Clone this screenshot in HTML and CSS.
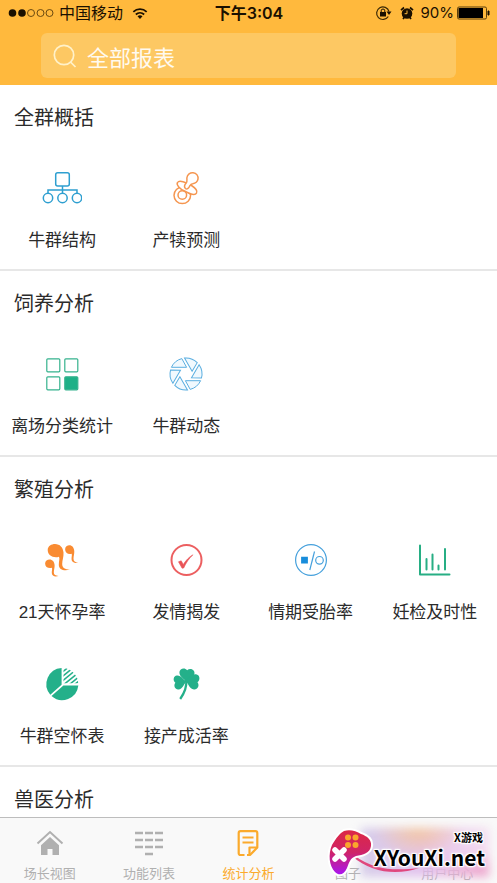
FILE: index.html
```html
<!DOCTYPE html>
<html lang="zh-CN">
<head>
<meta charset="utf-8">
<meta name="viewport" content="width=device-width, initial-scale=1">
<title>统计分析</title>
<link rel="stylesheet" href="styles.css">
</head>
<body>
<header class="top">
  <div class="status">
    <div class="status-left">
      <svg class="signal" width="46" height="10" viewBox="0 0 46 10" aria-hidden="true"><g fill="#1a1000"><circle cx="4.500" cy="5" r="3.800"/><circle cx="14" cy="5" r="3.800"/></g><g fill="none" stroke="#6b4a10" stroke-width="1"><circle cx="23" cy="5" r="3.500"/><circle cx="32.500" cy="5" r="3.500"/><circle cx="41.500" cy="5" r="3.500"/></g></svg>
      <span>中国移动</span>
      <svg width="16" height="13" viewBox="0 0 18 13" aria-hidden="true"><g fill="none" stroke="#1a1000" stroke-width="2"><path d="M1.500 4.600a11 11 0 0 1 15 0"/><path d="M4.300 7.600a7 7 0 0 1 9.400 0"/></g><path d="M6.200 9.700a4.200 4.200 0 0 1 5.600 0L9 12.600z" fill="#1a1000"/></svg>
    </div>
    <div class="clock">下午3:04</div>
    <div class="status-right">
      <svg width="17" height="16" viewBox="0 0 17 16" aria-hidden="true"><path d="M13.300 11.500A6.300 6.300 0 1 1 14 6.500" fill="none" stroke="#3a2805" stroke-width="1.200"/><path d="M11.500 6.500h5L14 10z" fill="#1a1000"/><rect x="5" y="7" width="6" height="4.500" fill="#1a1000"/><path d="M6.200 7V5.800a1.800 1.800 0 0 1 3.600 0V7" fill="none" stroke="#1a1000"/></svg>
      <svg width="14" height="14" viewBox="0 0 14 14" aria-hidden="true"><circle cx="7" cy="7.500" r="5.300" fill="#1a1000"/><path d="M1 4.200L4 1.500M13 4.200L10 1.500M3 13l1.500-2M11 13l-1.500-2" stroke="#1a1000" stroke-width="1.700"/><path d="M7 4.500v3.200H4.600" fill="none" stroke="#ffb93d"/></svg>
      <span>90%</span>
      <svg width="33" height="14" viewBox="0 0 33 14" aria-hidden="true"><rect x=".5" y="1" width="29" height="12" rx="1.500" fill="none" stroke="#5b3f0c"/><rect x="1.500" y="2" width="24.500" height="10" fill="#000"/><path d="M31 5v4h1V5z" fill="#1a1000" stroke="#1a1000"/></svg>
    </div>
  </div>
  <label class="search">
    <svg width="24" height="24" viewBox="0 0 24 24" aria-hidden="true"><g fill="none" stroke="#fff1c9" stroke-width="1.700"><circle cx="11" cy="11" r="9.700"/><path d="M17.500 18l5 5"/></g></svg>
    <input type="search" placeholder="全部报表" aria-label="全部报表">
  </label>
</header>

<main class="content">
  <section class="group">
    <h2>全群概括</h2>
    <div class="grid">
      <a class="item" href="#"><svg class="icon" viewBox="0 0 40 40" aria-hidden="true"><g fill="none" stroke="#2e9fd0" stroke-width="1.500"><rect x="13.700" y="4.700" width="13.600" height="13.200" rx="2"/><path d="M20.500 18v7M6 25v-3h29v3"/><circle cx="6" cy="30" r="4.700"/><circle cx="20.500" cy="30" r="4.700"/><circle cx="35" cy="30" r="4.700"/></g></svg><span>牛群结构</span></a>
      <a class="item" href="#"><svg class="icon" viewBox="0 0 40 40" aria-hidden="true"><g fill="#fff" stroke="#f59650" stroke-width="1.500"><circle cx="16.300" cy="27.300" r="8.300"/><circle cx="16.300" cy="27" r="4.300"/><path d="M11.500 14.500c-1.500 2.500 2.500 6.500 7 8.500 5 2.800 10.500 4.700 12 2.200 1.300-2.200-.8-5-5-7.700-5.500-3.500-12.500-5.600-14-3z"/><path d="M19.400 20.500c-1.600-1.700-.5-4 .8-5.400 1.400-1.600.5-3.300.7-5.300.4-3.400 3.300-5.300 6.200-5 3.400.3 5.500 3.200 4.900 6.300-.6 3-3.200 4.300-5.300 4.600-2 .2-2.300 1.200-3.200 2.800-.9 1.800-2.700 3.300-4.100 2z"/></g></svg><span>产犊预测</span></a>
    </div>
  </section>
  <section class="group">
    <h2>饲养分析</h2>
    <div class="grid">
      <a class="item" href="#"><svg class="icon" viewBox="0 0 40 40" aria-hidden="true"><g fill="none" stroke="#35b28d" stroke-width="1.200"><rect x="4.800" y="4.800" width="13" height="13" rx="1"/><rect x="22.800" y="4.800" width="13" height="13" rx="1"/><rect x="4.800" y="22.800" width="13" height="13" rx="1"/><rect x="22.800" y="22.800" width="13" height="13" rx="1" fill="#1fb087"/></g></svg><span>离场分类统计</span></a>
      <a class="item" href="#"><svg class="icon" viewBox="-20 -20 40 40" aria-hidden="true"><defs><path id="blade" d="M-14.600-6.700H.6L-4.200-15.400A16 16 0 0 0-14.600-6.700z"/></defs><g fill="#f1f9fe" stroke="#5aaee0"><use href="#blade"/><use href="#blade" transform="rotate(60)"/><use href="#blade" transform="rotate(120)"/><use href="#blade" transform="rotate(180)"/><use href="#blade" transform="rotate(240)"/><use href="#blade" transform="rotate(300)"/></g></svg><span>牛群动态</span></a>
    </div>
  </section>
  <section class="group">
    <h2>繁殖分析</h2>
    <div class="grid">
      <a class="item" href="#"><svg class="icon" viewBox="0 0 40 40" aria-hidden="true"><defs><path id="drop" d="M5.700 10C5.700 6 9.500 4 13 4c5 0 8 3.500 8.500 8.500.3 4.500-1.300 7.500-1.300 11.500 0 4 2.800 5.500 7.800 5.500-6 2-11 0-11.200-4.500-.1-4 1.200-6 .2-8.300-1.300.4-2 .5-3 .5-4.800 0-8.300-2.700-8.300-7.200z"/></defs><g fill="#f98b32"><use href="#drop"/><use href="#drop" transform="translate(19.800 2.600) scale(.58 .67)"/><use href="#drop" transform="translate(-.3 17) scale(.6 .64)"/></g></svg><span>21天怀孕率</span></a>
      <a class="item" href="#"><svg class="icon" viewBox="0 0 40 40" aria-hidden="true"><circle cx="20.500" cy="20" r="15" fill="none" stroke="#ec5f60" stroke-width="2"/><path d="M12.500 21.800l2.700-1 2.100 3.700c2.500-4 5.700-7.500 9.600-9.700-4 3.700-6.800 7.900-9.200 13.200l-1.600.2z" fill="#e95457" stroke="#e95457" stroke-width=".6"/></svg><span>发情揭发</span></a>
      <a class="item" href="#"><svg class="icon" viewBox="0 0 40 40" aria-hidden="true"><g fill="none" stroke="#45a0dc" stroke-width="1.200"><circle cx="20" cy="20" r="15.400"/><path d="M23.500 11.500L18.800 30"/><circle cx="28.500" cy="20.300" r="3.800"/></g><path d="M10.100 16.700h6.800v6.800h-6.800z" fill="#188ddb"/></svg><span>情期受胎率</span></a>
      <a class="item" href="#"><svg class="icon" viewBox="0 0 40 40" aria-hidden="true"><g fill="none" stroke="#27ae84" stroke-width="2" stroke-linecap="round" stroke-linejoin="round"><path d="M5 5.500v29h29.500"/><path d="M11.500 19v10.500M17.500 14.500v15M23.500 25.500v4M30 9v20.500"/></g></svg><span>妊检及时性</span></a>
      <a class="item" href="#"><svg class="icon" viewBox="0 0 40 40" aria-hidden="true"><g fill="#24b08a"><path d="M19.600 4a16.200 16.200 0 0 0-11.300 26.700l11.300-9.900z"/><path d="M9.500 32a16.200 16.200 0 0 0 26.800-10.500H21.400z"/></g><defs><clipPath id="slice"><path d="M21.500 4a16.200 16.200 0 0 1 14.800 15.300H21.500z"/></clipPath></defs><path clip-path="url(#slice)" d="M18 10l10-8M18 14.500L32 3M18 19L35 5M20 22L38 7.500M25 22.500l13-10.500M30 22.500l10-8" stroke="#24b08a" stroke-width="1.600"/></svg><span>牛群空怀表</span></a>
      <a class="item" href="#"><svg class="icon" viewBox="0 0 40 40" aria-hidden="true"><defs><path id="leaf" d="M0 0C-2.500-3-7-4.500-7-8.700c0-3.300 4.400-5 7-2.300 2.600-2.700 7-1 7 2.300C7-4.500 2.500-3 0 0z"/></defs><g fill="#24b08a"><use href="#leaf" transform="translate(20.300 18) rotate(4) scale(1.080)"/><use href="#leaf" transform="translate(20.300 17.500) rotate(-97)"/><use href="#leaf" transform="translate(19.500 16.500) rotate(98) scale(1.100)"/></g><path d="M20.200 16c.8 7-1.800 13-6 19" fill="none" stroke="#24b08a" stroke-width="2.200"/></svg><span>接产成活率</span></a>
    </div>
  </section>
  <section class="group">
    <h2>兽医分析</h2>
  </section>
</main>

<footer class="bottom">
  <nav class="tabs">
    <a class="tab" href="#"><svg class="tab-icon" viewBox="0 0 28 28" aria-hidden="true"><path d="M1.500 14.500L14 3l12.500 11.500" fill="none" stroke="#b0b0b0" stroke-width="2"/><path d="M14 8l9 8.200V26h-6.500v-6h-5v6H5v-9.800z" fill="#b0b0b0"/></svg><span>场长视图</span></a>
    <a class="tab" href="#"><svg class="tab-icon" viewBox="0 0 28 28" aria-hidden="true"><path d="M0 4h8M10 4h8M20 4h8M0 11h8M10 11h8M20 11h8M0 18h8M10 18h8M20 18h8M10 25h8" stroke="#b0b0b0" stroke-width="2.500"/></svg><span>功能列表</span></a>
    <a class="tab active" href="#" aria-current="page"><svg class="tab-icon" viewBox="0 0 28 28" aria-hidden="true"><g fill="none" stroke="#fbaa2c" stroke-width="2.200" stroke-linejoin="round"><path d="M10 26H6.500A1.800 1.800 0 0 1 4.700 24V4A1.800 1.800 0 0 1 6.500 2.200h15A1.800 1.800 0 0 1 23.300 4v14.500L16 26z"/><path d="M15.500 26v-7.500h7.800M8.500 8.500h11M8.500 13.500h11"/></g><path d="M10.500 24.500h2.500v3h-2.500z" fill="#f9f9f9"/></svg><span>统计分析</span></a>
    <a class="tab" href="#"><svg class="tab-icon" viewBox="0 0 28 28" aria-hidden="true"></svg><span>图子</span></a>
    <a class="tab" href="#"><svg class="tab-icon" viewBox="0 0 28 28" aria-hidden="true"></svg><span>用户中心</span></a>
  </nav>
  <div class="brand">
    <div class="haze"></div>
    <svg class="swoosh" viewBox="0 0 170 65" aria-hidden="true"><path d="M27 37C48 54 72 52 92 50 72 57 45 56 25 38z" fill="#e0477d"/></svg>
    <svg class="pad" viewBox="0 0 48 50" aria-hidden="true"><defs><linearGradient id="padfill" x2="0" y2="1"><stop stop-color="#dc2845"/><stop offset=".5" stop-color="#cf2467"/><stop offset="1" stop-color="#aa16ef"/></linearGradient></defs><path d="M5 17C9 10 13 5 17 3c6-2 12 0 17 3 6 2 11 6 10 12-1 7-8 9-15 10-6 2-7 7-9 12-3 7-8 8-12 4C2 38 1 26 5 17z" fill="url(#padfill)" stroke="#fff" stroke-width="4" paint-order="stroke"/><g fill="#faa62c"><circle cx="21" cy="9.500" r="3"/><circle cx="28.500" cy="9.500" r="3"/><circle cx="21" cy="17" r="3"/><circle cx="28.500" cy="17" r="3"/></g><path d="M8 22l9 9M17 22l-9 9" stroke="#fff" stroke-width="5.500" stroke-linecap="round"/></svg>
    <div class="brand-text"><small>X游戏</small><strong>XYouXi.net</strong></div>
  </div>
</footer>
</body>
</html>
```
FILE: styles.css
```css
* { box-sizing: border-box; }

body {
  margin: 0;
  height: 100vh;
  display: flex;
  flex-direction: column;
  overflow: hidden;
  background: #fff;
  color: #2b2b2b;
  font-family: "Liberation Sans", "Noto Sans CJK SC", sans-serif;
}

a { color: inherit; text-decoration: none; }
svg { display: block; flex: none; }

.top {
  flex: none;
  padding-bottom: 7px;
  background: #ffb93d;
}

.status {
  display: grid;
  grid-template-columns: 1fr auto 1fr;
  align-items: center;
  height: 26px;
  margin-bottom: 7px;
  padding: 0 7px 0 8px;
  color: #1a1000;
  font-family: Inter, "Noto Sans CJK SC", sans-serif;
  font-size: 16px;
  line-height: 24px;
}

.status-left, .status-right { display: flex; align-items: center; }
.status-left { gap: 5px; }
.status-left span { margin-right: 4px; }
.status-right { justify-content: flex-end; gap: 3px; }
.status-right svg + svg { margin-left: 5px; }
.status-right span { margin-left: 4px; font-size: 15px; }
.clock { font-weight: 600; }

.search {
  display: flex;
  align-items: center;
  gap: 10px;
  height: 45px;
  margin: 0 41px;
  padding: 0 12px;
  border-radius: 6px;
  background: #fdc863;
}

.search input {
  flex: 1;
  min-width: 0;
  padding: 0;
  border: 0;
  outline: 0;
  background: none;
  color: #fff;
  font: 22px/32px "Noto Sans CJK SC", sans-serif;
}

.search input::placeholder { color: #fffaf0; opacity: 1; }

.content { flex: 1; min-height: 0; overflow: hidden; }

.group { border-bottom: 2px solid #e7e7e7; }

.group h2 {
  margin: 0;
  height: 61px;
  padding: 17px 14px 0;
  font-size: 20px;
  line-height: 32px;
  font-weight: 400;
}

.grid {
  display: grid;
  grid-template-columns: repeat(4, 1fr);
  margin-bottom: -1px;
}

.item {
  display: flex;
  flex-direction: column;
  align-items: center;
  gap: 21px;
  height: 124px;
  padding-top: 22px;
  font-size: 17px;
  line-height: 24px;
  white-space: nowrap;
}

.icon { width: 40px; height: 40px; }

.bottom {
  position: relative;
  flex: none;
  height: 66px;
  border-top: 1px solid #bdbdbd;
  background: #f9f9f9;
}

.tabs { display: grid; grid-template-columns: repeat(5, 1fr); }

.tab {
  display: flex;
  flex-direction: column;
  align-items: center;
  gap: 7px;
  padding-top: 11px;
  color: #b0b0b0;
  font-size: 13px;
  line-height: 20px;
}

.tab-icon { width: 28px; height: 28px; }
.tab.active { color: #fbaa2c; }

.brand {
  position: absolute;
  right: 0;
  bottom: 0;
  width: 170px;
  height: 65px;
  overflow: hidden;
}

.haze {
  position: absolute;
  inset: 10px 8px 6px 34px;
  background:
    radial-gradient(ellipse at 45% 0, #f7c78acc, #f7c78a00 45%),
    radial-gradient(ellipse at 100% 90%, #eb8fbecc, #eb8fbe00 35%),
    linear-gradient(90deg, #d0c6e6dd, #e0b9ecdd 50%, #f3d9eedd);
  filter: blur(5px);
}

.swoosh { position: absolute; inset: 0; width: 170px; height: 65px; }

.pad {
  position: absolute;
  left: 0;
  top: 10px;
  width: 48px;
  height: 50px;
}

.brand-text {
  position: absolute;
  right: 12px;
  bottom: 12px;
  display: flex;
  flex-direction: column;
  align-items: flex-end;
  color: #000;
  font-family: "Noto Sans CJK SC", sans-serif;
  text-shadow: 0 0 2px #fff, 1px 1px 1px #fff, -1px -1px 1px #fff, 1px -1px 1px #fff, -1px 1px 1px #fff, 0 0 4px #fff;
}

.brand-text small {
  margin-right: 2px;
  font-size: 11px;
  line-height: 12px;
  font-weight: 700;
}

.brand-text strong {
  font-size: 21px;
  line-height: 28px;
}
```
